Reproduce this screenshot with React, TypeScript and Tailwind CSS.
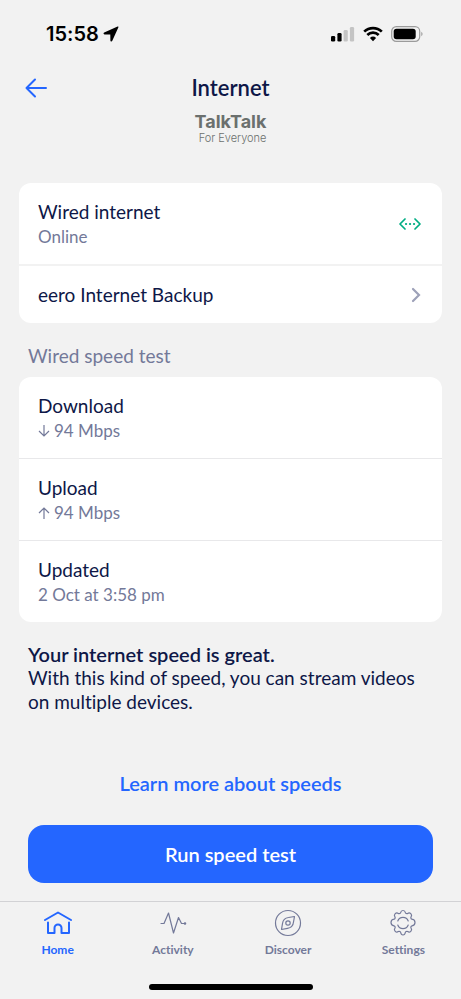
import type { ReactNode } from "react";

function StatusBar() {
  return (
    <div className="flex h-[68px] items-center justify-between pl-[46px] pr-[38px] text-black">
      <div className="flex items-center gap-1">
        <span className="font-['Inter',sans-serif] text-[20px] leading-6 font-semibold">15:58</span>
        <svg className="h-4 w-4" viewBox="0 0 16 16" fill="currentColor" aria-hidden="true">
          <path d="M14.6.6 1.200 6.600C.1 7.100.4 8.400 1.500 8.400l5.800.1.1 5.900c0 1.200 1.400 1.500 1.900.4l6-13.200c.4-.8-.1-1.300-.7-1z" />
        </svg>
      </div>
      <div className="flex items-center gap-2">
        <svg className="h-4 w-6" viewBox="0 0 24 16" aria-hidden="true">
          <rect x="0" y="10" width="4.200" height="5.500" rx="1.300" />
          <rect x="6.400" y="7" width="4.200" height="8.500" rx="1.300" />
          <rect x="12.600" y="4" width="4.200" height="11.500" rx="1.300" fill="#c4c4c4" />
          <rect x="18.900" y="1" width="4.200" height="14.500" rx="1.300" fill="#c4c4c4" />
        </svg>
        <svg className="h-4 w-5" viewBox="0 0 20 16" fill="none" stroke="currentColor" aria-hidden="true">
          <path d="M1.200 5.600a12.700 12.700 0 0 1 17.600 0" strokeWidth="2.700" strokeLinecap="butt" />
          <path d="M4.300 9a8.200 8.200 0 0 1 11.400 0" strokeWidth="2.700" />
          <path d="M10 15.200 6.900 12a4.500 4.500 0 0 1 6.200 0z" fill="currentColor" stroke="none" />
        </svg>
        <svg className="h-4 w-8" viewBox="0 0 32 16" aria-hidden="true">
          <rect x="0.700" y="0.700" width="28" height="14.600" rx="4.600" fill="none" stroke="#9b9b9b" strokeWidth="1.200" />
          <rect x="2.700" y="2.700" width="22" height="10.600" rx="2.800" />
          <path d="M30.300 5.800v4.400c1.700-.7 1.700-3.700 0-4.400z" fill="#9b9b9b" />
        </svg>
      </div>
    </div>
  );
}

function Row({ title, detail, children }: { title: string; detail?: ReactNode; children?: ReactNode }) {
  return (
    <div className="flex items-center justify-between pt-4 pr-[21px] pb-[15px] pl-[19px]">
      <div>
        <div className="text-[19px] leading-[26px]">{title}</div>
        {detail && <div className="flex items-center gap-1 text-[17px] leading-6 text-[#737999]">{detail}</div>}
      </div>
      {children}
    </div>
  );
}

function SpeedArrow({ up }: { up?: boolean }) {
  return (
    <svg className="h-4 w-3" viewBox="0 0 12 16" fill="none" stroke="currentColor" strokeWidth="1.200" aria-hidden="true">
      <path d={up ? "M6 14V3M1 8l5-5 5 5" : "M6 2v11M1 8l5 5 5-5"} />
    </svg>
  );
}

function Tab({ label, active, children }: { label: string; active?: boolean; children: ReactNode }) {
  return (
    <a
      href="#"
      aria-current={active ? "page" : undefined}
      className={`flex flex-1 flex-col items-center gap-1 ${active ? "text-[#2466ff]" : "text-[#737999]"}`}
    >
      <svg className="h-[30px] w-[30px]" viewBox="0 0 30 30" fill="none" stroke="currentColor" strokeWidth="1.200" strokeLinecap="round" strokeLinejoin="round" aria-hidden="true">
        {children}
      </svg>
      <span className="text-[12px] leading-4 font-bold">{label}</span>
    </a>
  );
}

export default function App() {
  return (
    <div className="flex min-h-screen flex-col bg-[#f2f2f2] font-['Lato',sans-serif] text-[#0e1747] [font-variant-ligatures:none]">
      <StatusBar />

      <header className="grid grid-cols-[40px_1fr_40px] px-4">
        <button type="button" aria-label="Back" className="flex h-10 items-center justify-center text-[#2466ff]">
          <svg className="h-5 w-[22px]" viewBox="0 0 22 20" fill="none" stroke="currentColor" strokeWidth="2" strokeLinecap="round" strokeLinejoin="round">
            <path d="M21 10H1.500M10 1.500 1.500 10l8.500 8.500" />
          </svg>
        </button>
        <div className="flex flex-col items-center">
          <h1 className="text-[22px] leading-10 font-semibold">Internet</h1>
          <div className="mt-[5px] flex flex-col items-end text-[#6b706e]">
            <span className="font-['Inter',sans-serif] text-[18px] leading-[18px] font-bold">TalkTalk</span>
            <span className="font-['Inter',sans-serif] text-[11px] leading-[14px] font-light">For Everyone</span>
          </div>
        </div>
      </header>

      <main className="flex flex-1 flex-col px-[19px] pt-[38px]">
        <section className="divide-y-2 divide-[#f2f2f2] rounded-xl bg-white">
          <Row title="Wired internet" detail="Online">
            <svg className="h-3 w-[22px] text-[#00ad83]" viewBox="0 0 22 12" fill="none" stroke="currentColor" strokeWidth="1.700" strokeLinecap="round" strokeLinejoin="round" aria-label="Connected" role="img">
              <path d="M6 1 1 6l5 5M16 1l5 5-5 5" />
              <path d="M7 6h.1M11 6h.1M15 6h.1" strokeWidth="2.200" />
            </svg>
          </Row>
          <button type="button" className="block w-full text-left">
            <Row title="eero Internet Backup">
              <svg className="h-4 w-[10px] text-[#9da1b8]" viewBox="0 0 10 16" fill="none" stroke="currentColor" strokeWidth="2.200" strokeLinecap="round" strokeLinejoin="miter" aria-hidden="true">
                <path d="m2 2 6 6-6 6" />
              </svg>
            </Row>
          </button>
        </section>

        <h2 className="px-[9px] pt-5 pb-2 text-[19px] leading-[26px] text-[#737999]">Wired speed test</h2>

        <section className="divide-y divide-[#e8e8ea] rounded-xl bg-white">
          <Row title="Download" detail={<><SpeedArrow /><span>94 Mbps</span></>} />
          <Row title="Upload" detail={<><SpeedArrow up /><span>94 Mbps</span></>} />
          <Row title="Updated" detail="2 Oct at 3:58 pm" />
        </section>

        <div className="px-[9px] pt-5 text-[19px] leading-6">
          <p className="text-[20px] leading-6 font-semibold">Your internet speed is great.</p>
          <p>With this kind of speed, you can stream videos on multiple devices.</p>
        </div>

        <div className="mt-auto flex flex-col px-[9px] pb-[18px] text-[20px] leading-[26px] font-semibold">
          <a href="#" className="self-center text-[#2466ff]">Learn more about speeds</a>
          <button type="button" className="mt-[29px] h-[58px] w-full rounded-2xl bg-[#2466ff] text-white">Run speed test</button>
        </div>
      </main>

      <nav className="flex border-t border-[#d2d2d5] pt-[6px]">
        <Tab label="Home" active>
          <g strokeWidth="2">
            <path d="M2 12 15 4.500 28 12" />
            <path d="M5 14.500V25h6.500v-5a3.500 3.500 0 0 1 7 0v5H26V14.500" />
          </g>
        </Tab>
        <Tab label="Activity">
          <path d="M3 15.500h3L10.500 5l5 20 5-15.500 3 6H27" />
          <circle cx="27" cy="15.500" r="0.700" fill="currentColor" />
        </Tab>
        <Tab label="Discover">
          <circle cx="15" cy="15" r="12.500" />
          <path d="M21.500 8.500 20.500 14a7 7 0 0 1-6 6.300l-6 1.200L9.500 15.500A7 7 0 0 1 15.500 9.500z" />
          <circle cx="15" cy="15" r="2.200" />
        </Tab>
        <Tab label="Settings">
          <path d="M12.700 4.500c.2-1.300.7-2 2.300-2s2.100.7 2.300 2c.2 1 1.500 1.500 2.400.9 1.100-.8 2-.8 3.100.3s1.100 2 .3 3.100c-.6.900-.1 2.200.9 2.400 1.300.2 3 1.200 3 3.300s-1.700 3.100-3 3.300c-1 .2-1.500 1.500-.9 2.400.8 1.100.8 2-.3 3.100s-2 1.100-3.100.3c-.9-.6-2.200-.1-2.400.9-.2 1.300-.7 2.500-2.300 2.500s-2.100-1.200-2.300-2.500c-.2-1-1.500-1.500-2.400-.9-1.100.8-2 .8-3.100-.3s-1.100-2-.3-3.100c.6-.9.1-2.200-.9-2.400-1.300-.2-3-1.200-3-3.300s1.700-3.100 3-3.300c1-.2 1.500-1.500.9-2.400-.8-1.100-.8-2 .3-3.100s2-1.100 3.100-.3c.9.6 2.200.1 2.400-.9z" />
          <path d="M9.800 13a5.500 5.500 0 0 1 10.400 0M9.800 17a5.500 5.500 0 0 0 10.400 0" />
        </Tab>
      </nav>
      <div className="flex justify-center pt-[26px] pb-[9px]">
        <div className="h-[6px] w-[164px] rounded-full bg-black" />
      </div>
    </div>
  );
}
